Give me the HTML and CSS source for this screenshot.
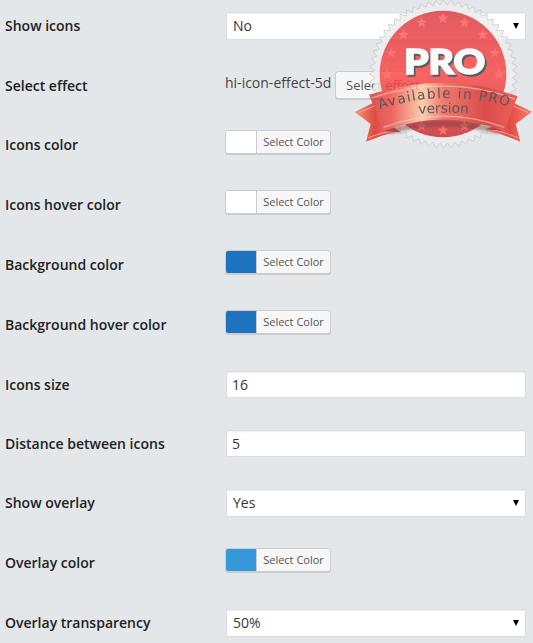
FILE: index.html
```
<!DOCTYPE html>
<html lang="en">
<head>
<meta charset="utf-8">
<title>Icon settings</title>
<link rel="stylesheet" href="styles.css">
</head>
<body>
<main class="settings">
  <div class="row"><div class="label">Show icons</div><div class="field select">No<span class="arrow"></span></div></div>
  <div class="row short"><div class="label">Select effect</div><div class="effect"><span class="effect-name">hi-icon-effect-5d</span><button class="effect-button">Select effect</button></div></div>
  <div class="row"><div class="label">Icons color</div><div class="picker"><span class="swatch white"></span><span class="pick">Select Color</span></div></div>
  <div class="row"><div class="label">Icons hover color</div><div class="picker"><span class="swatch white"></span><span class="pick">Select Color</span></div></div>
  <div class="row"><div class="label">Background color</div><div class="picker"><span class="swatch blue"></span><span class="pick">Select Color</span></div></div>
  <div class="row"><div class="label">Background hover color</div><div class="picker"><span class="swatch blue"></span><span class="pick">Select Color</span></div></div>
  <div class="row short"><div class="label">Icons size</div><div class="field input">16</div></div>
  <div class="row short"><div class="label">Distance between icons</div><div class="field input">5</div></div>
  <div class="row"><div class="label">Show overlay</div><div class="field select">Yes<span class="arrow"></span></div></div>
  <div class="row"><div class="label">Overlay color</div><div class="picker"><span class="swatch sky"></span><span class="pick">Select Color</span></div></div>
  <div class="row last"><div class="label">Overlay transparency</div><div class="field select">50%<span class="arrow"></span></div></div>
</main>
<svg class="badge" viewBox="0 0 549 450">
  <defs>
    <linearGradient id="seal" x1="0" y1="0" x2="0" y2="1"><stop offset="0" stop-color="#dc3f45"/><stop offset=".5" stop-color="#fb4c4c"/><stop offset="1" stop-color="#cb3338"/></linearGradient>
    <linearGradient id="ribbon"><stop offset="0" stop-color="#d93a3a"/><stop offset=".15" stop-color="#ef5049"/><stop offset=".36" stop-color="#ffc9a4"/><stop offset=".5" stop-color="#f4655a"/><stop offset=".78" stop-color="#d8322f"/><stop offset="1" stop-color="#f04a40"/></linearGradient>
    <linearGradient id="tailLeft"><stop offset="0" stop-color="#ff8060"/><stop offset=".45" stop-color="#e02e28"/><stop offset="1" stop-color="#f0705c"/></linearGradient>
    <linearGradient id="tailRight"><stop offset="0" stop-color="#f0705c"/><stop offset=".5" stop-color="#e02e28"/><stop offset="1" stop-color="#ff7058"/></linearGradient>
    <path id="star" d="M0-17 4.5-6 16-5 7 3 10 14 0 8-10 14-7 3-16-5-4.5-6Z"/>
    <path id="arc" d="M89 328Q280 263 486 322"/>
    <path id="arc2" d="M206 341Q280 336 370 341"/>
    <filter id="soft" x="-10%" y="-20%" width="120%" height="150%"><feGaussianBlur stdDeviation="5"/></filter>
  </defs>
  <path id="teeth" fill="#eeeeef" stroke="#c3c5c7" stroke-width="2.5"/>
  <circle cx="279" cy="222" r="190" fill="url(#seal)"/>
  <g id="stars" fill="#ff5c5c"></g>
  <path d="M98 388Q280 338 464 388L440 402Q280 355 125 402Z" fill="#5d2020" opacity=".5" filter="url(#soft)"/>
  <path d="M14 336L70 308 104 374 152 392Q98 404 48 425L62 372Z" fill="url(#tailLeft)"/>
  <path d="M546 335L490 308 455 374 410 389Q460 404 511 425L497 372Z" fill="url(#tailRight)"/>
  <path d="M26 339L72 318M55 413Q94 398 132 391M535 338L490 318M504 413Q466 398 428 388" fill="none" stroke="#ffc2ae" stroke-width="2"/>
  <path d="M100 394L152 397 128 380ZM463 393L407 388 433 378Z" fill="#a92724"/>
  <path d="M57 284Q169 248 280 248T503 289Q482 339 463 394Q280 323 100 394Q80 337 57 284Z" fill="url(#ribbon)"/>
  <path d="M64 294Q170 258 280 258T495 297M101 382Q280 315 463 382" fill="none" stroke="#ffc6b2" stroke-width="2.5"/>
  <text class="pro" x="162" y="221" textLength="244" lengthAdjust="spacingAndGlyphs">PRO</text>
  <text class="note"><textPath href="#arc" textLength="393">Available in PRO</textPath></text>
  <text class="note"><textPath href="#arc2" textLength="150">version</textPath></text>
</svg>
<script src="badge.js"></script>
</body>
</html>
```
FILE: styles.css
```
* { box-sizing: border-box; }
body { margin: 0; height: 643px; overflow: hidden; background: #e3e7ea; font: 14px/20px "Open Sans", "Noto Sans", sans-serif; color: #32373c; position: relative; }
.row { display: grid; grid-template-columns: 220px 301px; padding-left: 5px; height: 60px; align-items: start; }
.row.short { height: 59px; }
.row.last { height: 46px; }
.label { font-weight: 600; color: #222; padding-top: 16px; }
.field { background: #fff; border: 1px solid #ddd; box-shadow: inset 0 1px 2px rgba(0,0,0,.07); margin: 12px 0 0 1px; height: 28px; width: 300px; padding: 3px 7px 3px 6px; display: flex; justify-content: space-between; }
.input { height: 27px; padding-left: 5px; }
.arrow { width: 0; height: 0; border: 3.5px solid transparent; border-top: 6px solid #000; border-bottom: 0; margin: 7px -1px 0 0; }
.effect { display: flex; white-space: nowrap; padding-top: 11px; }
.effect-name { width: 110px; padding-top: 2px; color: #444; }
.effect-button { font: 13px/26px "Open Sans", sans-serif; color: #555; background: #f7f7f7; border: 1px solid #ccc; border-radius: 3px; padding: 0 10px; height: 28px; box-shadow: 0 1px 0 #ccc; }
.picker { display: flex; width: 106px; height: 24px; margin-top: 11px; border: 1px solid #ccc; border-radius: 3px; overflow: hidden; box-shadow: 0 1px 0 #ccc; background: #f7f7f7; }
.swatch { width: 30px; }
.white { background: #fff; }
.blue { background: #1e73be; }
.sky { background: #3498db; }
.pick { flex: 1; border-left: 1px solid #ccc; font-size: 11px; line-height: 22px; text-align: center; color: #555; white-space: nowrap; }
.badge { position: absolute; left: 350px; top: 0; width: 183px; height: 150px; opacity: .85; }
.pro { font: 900 104px Lato, sans-serif; fill: #fff; stroke: #fff; stroke-width: 5px; filter: drop-shadow(5px 6px 0 #3c4549); }
.note { font: 41px "DejaVu Sans", sans-serif; fill: #404040; }
```
FILE: badge.js
```
const points = [];
for (let i = 0; i < 120; i++) {
  const r = i % 2 ? 207 : 222;
  const a = i * Math.PI / 60;
  points.push((281 + r * Math.sin(a)).toFixed(1) + " " + (222 - r * Math.cos(a)).toFixed(1));
}
document.getElementById("teeth").setAttribute("d", "M" + points.join("L") + "Z");

const stars = document.getElementById("stars");
for (let i = 0; i < 16; i++) {
  const a = i * Math.PI / 8;
  const star = document.createElementNS("http://www.w3.org/2000/svg", "use");
  star.setAttribute("href", "#star");
  star.setAttribute("transform", `translate(${279 + 168 * Math.sin(a)} ${223 - 168 * Math.cos(a)})`);
  stars.append(star);
}
```
